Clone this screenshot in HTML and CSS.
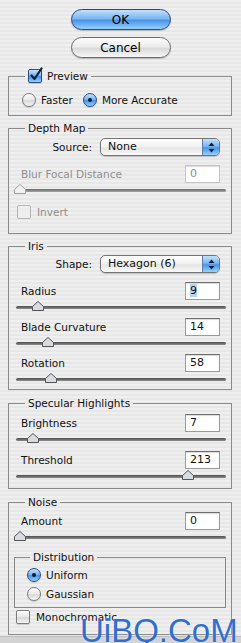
FILE: index.html
```html
<!DOCTYPE html>
<html>
<head>
    <title>Lens Blur</title>
    <link rel="stylesheet" href="styles.css">
</head>
<body>
    <div class="buttons">
        <button class="btn btn-ok">OK</button>
        <button class="btn">Cancel</button>
    </div>

    <fieldset class="group group-preview">
        <legend>
            <span class="check checked">
                <svg width="16" height="16" viewBox="0 0 16 16"><path d="M3.5 8.5 L6.5 12 L13.5 1.5" fill="none" stroke="#10203a" stroke-width="2.2" stroke-linecap="round" stroke-linejoin="round"/></svg>
            </span>Preview
        </legend>
        <div class="radio-row">
            <span class="radio-item"><span class="radio"></span>Faster</span>
            <span class="radio-item"><span class="radio on"></span>More Accurate</span>
        </div>
    </fieldset>

    <fieldset class="group group-depth">
        <legend>Depth Map</legend>
        <div class="popup-row">
            <span>Source:</span>
            <div class="popup">
                <span class="popup-text">None</span>
                <span class="popup-arrows"><svg width="7" height="11" viewBox="0 0 7 11"><path d="M3.5 0.5 L6.5 4 L0.5 4 Z M3.5 10.5 L6.5 7 L0.5 7 Z" fill="#10203a"/></svg></span>
            </div>
        </div>
        <div class="field disabled">
            <span>Blur Focal Distance</span>
            <span class="num">0</span>
        </div>
        <div class="slider disabled">
            <span class="thumb" style="left: 4px"><svg width="12" height="10" viewBox="0 0 12 10"><path d="M6 0.5 L11.5 5.5 L11.5 9.5 L0.5 9.5 L0.5 5.5 Z" fill="#f2f2f2" stroke="#a0a0a0"/></svg></span>
        </div>
        <div class="check-row disabled"><span class="check"></span>Invert</div>
    </fieldset>

    <fieldset class="group group-iris">
        <legend>Iris</legend>
        <div class="popup-row">
            <span>Shape:</span>
            <div class="popup">
                <span class="popup-text">Hexagon (6)</span>
                <span class="popup-arrows"><svg width="7" height="11" viewBox="0 0 7 11"><path d="M3.5 0.5 L6.5 4 L0.5 4 Z M3.5 10.5 L6.5 7 L0.5 7 Z" fill="#10203a"/></svg></span>
            </div>
        </div>
        <div class="field field-first">
            <span>Radius</span>
            <span class="num"><span class="sel">9</span></span>
        </div>
        <div class="slider">
            <span class="thumb" style="left: 22px"><svg width="12" height="10" viewBox="0 0 12 10"><path d="M6 0.5 L11.5 5.5 L11.5 9.5 L0.5 9.5 L0.5 5.5 Z" fill="#d8dbe0" stroke="#555"/></svg></span>
        </div>
        <div class="field">
            <span>Blade Curvature</span>
            <span class="num">14</span>
        </div>
        <div class="slider">
            <span class="thumb" style="left: 32px"><svg width="12" height="10" viewBox="0 0 12 10"><path d="M6 0.5 L11.5 5.5 L11.5 9.5 L0.5 9.5 L0.5 5.5 Z" fill="#d8dbe0" stroke="#555"/></svg></span>
        </div>
        <div class="field">
            <span>Rotation</span>
            <span class="num">58</span>
        </div>
        <div class="slider">
            <span class="thumb" style="left: 35px"><svg width="12" height="10" viewBox="0 0 12 10"><path d="M6 0.5 L11.5 5.5 L11.5 9.5 L0.5 9.5 L0.5 5.5 Z" fill="#d8dbe0" stroke="#555"/></svg></span>
        </div>
    </fieldset>

    <fieldset class="group group-specular">
        <legend>Specular Highlights</legend>
        <div class="field">
            <span>Brightness</span>
            <span class="num">7</span>
        </div>
        <div class="slider">
            <span class="thumb" style="left: 17px"><svg width="12" height="10" viewBox="0 0 12 10"><path d="M6 0.5 L11.5 5.5 L11.5 9.5 L0.5 9.5 L0.5 5.5 Z" fill="#d8dbe0" stroke="#555"/></svg></span>
        </div>
        <div class="field field-next">
            <span>Threshold</span>
            <span class="num">213</span>
        </div>
        <div class="slider">
            <span class="thumb" style="left: 172px"><svg width="12" height="10" viewBox="0 0 12 10"><path d="M6 0.5 L11.5 5.5 L11.5 9.5 L0.5 9.5 L0.5 5.5 Z" fill="#d8dbe0" stroke="#555"/></svg></span>
        </div>
    </fieldset>

    <fieldset class="group group-noise">
        <legend>Noise</legend>
        <div class="field">
            <span>Amount</span>
            <span class="num">0</span>
        </div>
        <div class="slider">
            <span class="thumb" style="left: 4px"><svg width="12" height="10" viewBox="0 0 12 10"><path d="M6 0.5 L11.5 5.5 L11.5 9.5 L0.5 9.5 L0.5 5.5 Z" fill="#d8dbe0" stroke="#555"/></svg></span>
        </div>
        <fieldset class="group group-dist">
            <legend>Distribution</legend>
            <div class="radio-item"><span class="radio on"></span>Uniform</div>
            <div class="radio-item radio-next"><span class="radio"></span>Gaussian</div>
        </fieldset>
        <div class="check-row mono"><span class="check"></span>Monochromatic</div>
    </fieldset>

    <div class="bottom-strip"></div>

    <div class="watermark">UiBQ.CoM</div>
</body>
</html>
```

FILE: styles.css
```css
* {
    margin: 0;
    padding: 0;
    box-sizing: border-box;
}

body {
    position: relative;
    width: 241px;
    height: 643px;
    overflow: hidden;
    background: repeating-linear-gradient(#efefef 0, #efefef 2px, #e7e7e7 2px, #e7e7e7 4px);
    font-family: "DejaVu Sans", sans-serif;
    font-size: 10.5px;
    color: #111;
}

/* top buttons */
.buttons {
    display: flex;
    flex-direction: column;
    align-items: center;
    gap: 7px;
    padding-top: 9px;
}

.btn {
    width: 100px;
    height: 21px;
    border-radius: 11px;
    border: 1px solid #6a6a6a;
    font-family: "DejaVu Sans", sans-serif;
    font-size: 12px;
    color: #000;
    background: linear-gradient(#fdfdfd, #ececec 45%, #dadada 55%, #f7f7f7);
    box-shadow: 0 1px 1px rgba(0, 0, 0, 0.2);
}

.btn-ok {
    border-color: #30467a;
    background: linear-gradient(#c4e0fc, #7ab6f2 45%, #4b93e6 55%, #93d2ff);
}

/* group boxes */
.group {
    margin: 5px 9px 0 8px;
    border: 1px solid #8a8a8a;
    padding: 0 10px 0 8px;
}

.group legend {
    margin-left: 8px;
    padding: 0 3px;
    line-height: 14px;
    height: 14px;
    display: flex;
    align-items: center;
}

.group-preview {
    margin-top: 11px;
    padding-top: 10px;
    padding-bottom: 8px;
}

.group-depth {
    padding-top: 3px;
    padding-bottom: 14px;
}

.group-iris {
    padding-top: 2px;
    padding-bottom: 3px;
}

.group-specular {
    margin-top: 6px;
    padding-top: 4px;
    padding-bottom: 5px;
}

.group-noise {
    margin-top: 6px;
    padding-top: 3px;
    padding-bottom: 10px;
}

.group-dist {
    margin: 6px -5px 0 -3px;
    padding: 4px 8px 6px 12px;
}

.group-dist legend {
    margin-left: 3px;
}

/* checkboxes and radios */
.check {
    position: relative;
    display: inline-block;
    width: 14px;
    height: 14px;
    border: 1px solid #7c7c7c;
    border-radius: 2px;
    background: linear-gradient(#ffffff, #e6e6e6 50%, #d6d6d6 55%, #f4f4f4);
    box-shadow: 0 1px 1px rgba(0, 0, 0, 0.15);
    margin-right: 5px;
}

.check.checked {
    border-color: #2f4a7e;
    background: linear-gradient(#c4e0fc, #7ab6f2 45%, #4b93e6 55%, #93d2ff);
}

.check svg {
    position: absolute;
    left: -1px;
    top: -3px;
}

.radio-row {
    display: flex;
    gap: 10px;
    padding-left: 5px;
}

.radio-item {
    display: flex;
    align-items: center;
    height: 14px;
}

.radio-next {
    margin-top: 5px;
}

.radio {
    position: relative;
    width: 14px;
    height: 14px;
    border: 1px solid #7a7a7a;
    border-radius: 50%;
    background: linear-gradient(#ffffff, #e8e8e8 50%, #d8d8d8 55%, #f6f6f6);
    box-shadow: 0 1px 1px rgba(0, 0, 0, 0.15);
    margin-right: 5px;
}

.radio.on {
    border-color: #2f4a7e;
    background: linear-gradient(#c4e0fc, #7ab6f2 45%, #4b93e6 55%, #93d2ff);
}

.radio.on::after {
    content: "";
    position: absolute;
    left: 4px;
    top: 4px;
    width: 4px;
    height: 4px;
    border-radius: 50%;
    background: #0d1a30;
}

.check-row {
    display: flex;
    align-items: center;
    height: 14px;
    margin-top: 8px;
}

.check-row .check {
    margin-right: 6px;
}

.mono {
    margin-top: 2px;
    margin-left: -1px;
}

/* popup menus */
.popup-row {
    display: flex;
    justify-content: flex-end;
    align-items: center;
    gap: 8px;
    padding-right: 1px;
}

.popup {
    display: flex;
    width: 120px;
    height: 18px;
    border: 1px solid #747474;
    border-radius: 5px;
    overflow: hidden;
    background: linear-gradient(#ffffff, #f0f0f0 50%, #e4e4e4 55%, #fafafa);
    box-shadow: 0 1px 1px rgba(0, 0, 0, 0.2);
}

.popup-text {
    flex: 1;
    padding-left: 7px;
    line-height: 16px;
    font-size: 11px;
}

.popup-arrows {
    width: 17px;
    display: flex;
    align-items: center;
    justify-content: center;
    border-left: 1px solid #5a7db0;
    background: linear-gradient(#c4e0fc, #7ab6f2 45%, #4b93e6 55%, #93d2ff);
}

/* value rows */
.field {
    display: flex;
    justify-content: space-between;
    align-items: center;
    height: 18px;
    margin-top: 4px;
    padding-left: 4px;
    padding-right: 1px;
}

.group-depth .field {
    margin-top: 9px;
}

.field-first {
    margin-top: 9px;
}

.group legend + .field {
    margin-top: 0;
}

.field-next {
    margin-top: 5px;
}

.num {
    width: 35px;
    height: 18px;
    border: 1px solid #9a9a9a;
    border-top-color: #6e6e6e;
    background: #fff;
    padding-left: 4px;
    line-height: 16px;
    font-size: 11px;
    box-shadow: inset 0 1px 1px rgba(0, 0, 0, 0.15);
}

.sel {
    background: #b5d3f6;
}

.disabled {
    color: #8e8e8e;
}

.disabled .num {
    color: #8e8e8e;
    border-color: #c4c4c4;
}

.disabled .check {
    border-color: #b4b4b4;
    background: #eeeeee;
    box-shadow: none;
}

/* sliders */
.slider {
    position: relative;
    height: 14px;
    margin-left: -1px;
    margin-right: -5px;
}

.slider::before {
    content: "";
    position: absolute;
    left: 0;
    right: 0;
    top: 6px;
    height: 3px;
    border-radius: 2px;
    background: linear-gradient(#4e4e4e, #8c8c8c);
}

.slider.disabled::before {
    background: linear-gradient(#6a6a6a, #a4a4a4);
}

.thumb {
    position: absolute;
    top: 1px;
    width: 12px;
    height: 10px;
    transform: translateX(-50%);
}

.thumb svg {
    display: block;
}

.bottom-strip {
    height: 8px;
    margin-top: 1px;
    background: #d3d3d3;
    border-top: 1px solid #bdbdbd;
}

.watermark {
    position: absolute;
    left: 80px;
    top: 614px;
    font-family: "Liberation Sans", Arial, sans-serif;
    font-size: 33px;
    line-height: 33px;
    color: #2f6fce;
    text-shadow: 0 0 2px rgba(255, 255, 255, 0.8);
}
```
